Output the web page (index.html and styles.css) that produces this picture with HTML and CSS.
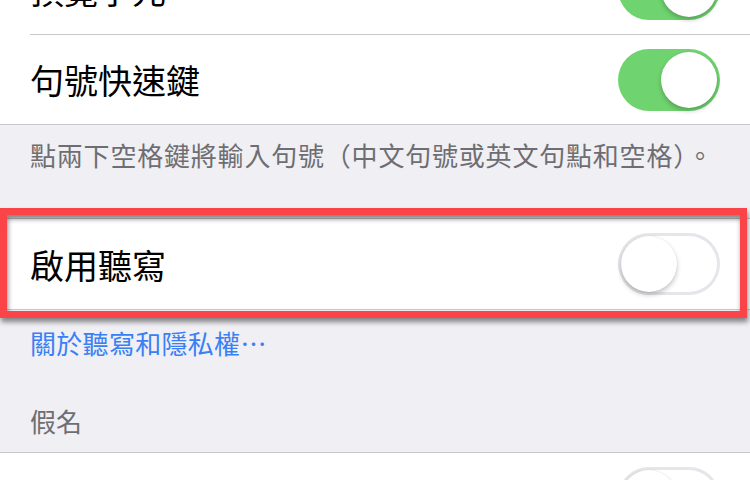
FILE: index.html
```html
<!DOCTYPE html>
<html lang="zh-Hant">

<head>
    <meta charset="UTF-8">
    <meta name="viewport" content="width=device-width, initial-scale=1.0">
    <title>鍵盤設定</title>
    <link rel="stylesheet" href="styles.css">
</head>

<body>
    <div class="screen">
        <div class="group">
            <div class="cell">
                <div class="cell-body">
                    <span class="cell-title">預覽字元</span>
                    <span class="switch on"><span class="knob"></span></span>
                </div>
            </div>
            <div class="cell">
                <div class="cell-body">
                    <span class="cell-title">句號快速鍵</span>
                    <span class="switch on"><span class="knob"></span></span>
                </div>
            </div>
        </div>
        <p class="group-footer">點兩下空格鍵將輸入句號（中文句號或英文句點和空格）。</p>

        <div class="group group-dictation">
            <div class="cell">
                <div class="cell-body">
                    <span class="cell-title">啟用聽寫</span>
                    <span class="switch"><span class="knob"></span></span>
                </div>
            </div>
            <div class="highlight"></div>
        </div>
        <p class="group-footer group-footer-link"><a class="link">關於聽寫和隱私權⋯</a></p>

        <p class="group-header">假名</p>
        <div class="group">
            <div class="cell">
                <div class="cell-body">
                    <span class="cell-title">僅限滑動輸入</span>
                    <span class="switch"><span class="knob"></span></span>
                </div>
            </div>
        </div>
    </div>
</body>

</html>
```

FILE: styles.css
```css
/* iOS 設定頁的顏色 */
:root {
    --bgColor: #efeff4;
    --lineColor: #c8c7cc;
    --grayText: #6d6d72;
    --linkColor: #3a80f5;
    --onColor: #6fd46f;
    --offColor: #e5e5ea;
    --markColor: #fb4447;
}

* {
    padding: 0;
    margin: 0;
    box-sizing: border-box;
}

body {
    overflow: hidden;
    height: 100vh;
    background-color: var(--bgColor);
    font-family: "Noto Sans CJK TC", "Noto Sans CJK SC", sans-serif;
}

/* 第一行只露出一小截 */
.screen {
    margin-top: -57px;
}

.group {
    position: relative;
    background-color: #fff;
    border-top: 1px solid var(--lineColor);
    border-bottom: 1px solid var(--lineColor);
}

.cell {
    padding-left: 30px;
}

.cell-body {
    display: flex;
    justify-content: space-between;
    align-items: center;
    height: 90px;
    padding-right: 30px;
}

.cell + .cell .cell-body {
    border-top: 1px solid var(--lineColor);
}

.cell-title {
    font-size: 34px;
    color: #000;
}

/* 開關 start */
.switch {
    display: flex;
    width: 102px;
    height: 62px;
    padding: 3px;
    border-radius: 31px;
    background-color: #fff;
    box-shadow: inset 0 0 0 3px var(--offColor);
}

.switch.on {
    justify-content: flex-end;
    background-color: var(--onColor);
    box-shadow: none;
}

.switch .knob {
    width: 56px;
    height: 56px;
    border-radius: 50%;
    background-color: #fff;
    box-shadow: 0 3px 5px rgba(0, 0, 0, 0.22), 0 0 1px rgba(0, 0, 0, 0.15);
}
/* 開關 end */

.group-footer {
    padding: 12px 30px 0;
    margin-bottom: 45px;
    font-size: 26px;
    line-height: 36px;
    letter-spacing: 0.8px;
    color: var(--grayText);
}

.group-footer-link {
    padding-top: 15px;
    margin-bottom: 0;
    letter-spacing: 0.3px;
}

.link {
    color: var(--linkColor);
}

.group-header {
    margin-top: 42px;
    padding: 0 30px 13px;
    font-size: 26px;
    line-height: 36px;
    color: var(--grayText);
}

/* 紅框標記 蓋在「啟用聽寫」那一行上面 */
.group-dictation .highlight {
    position: absolute;
    top: -11px;
    left: 0;
    width: 747px;
    height: 110px;
    border: 7px solid var(--markColor);
    box-shadow: 1px 4px 5px rgba(0, 0, 0, 0.45), inset 1px 4px 5px rgba(0, 0, 0, 0.45);
    pointer-events: none;
}
```
